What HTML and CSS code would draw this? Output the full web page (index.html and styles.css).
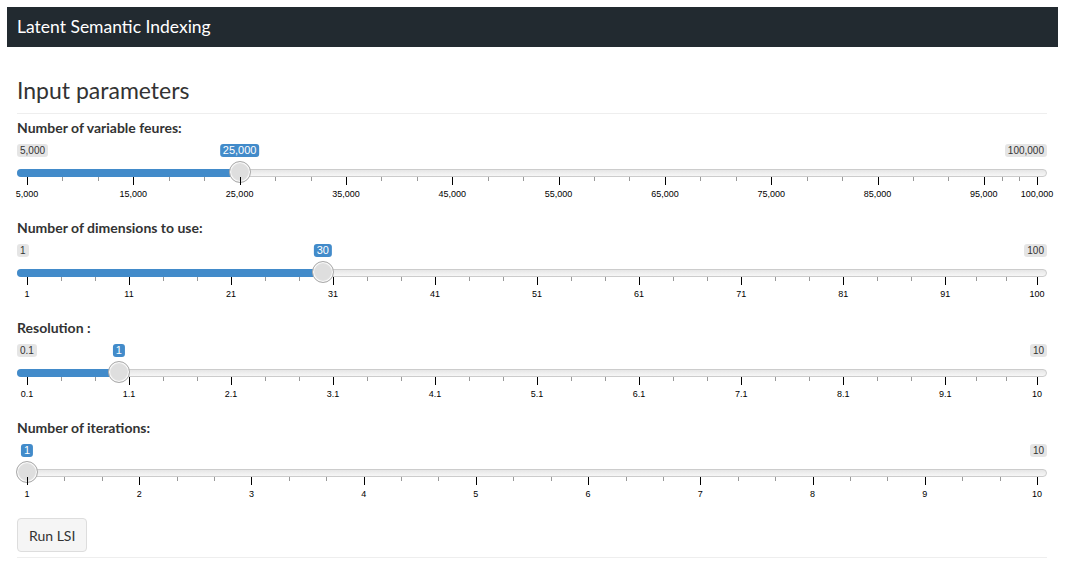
FILE: index.html
```html
<!DOCTYPE html>
<html>
<head>
<meta charset="utf-8">
<title>Latent Semantic Indexing</title>
<link rel="stylesheet" href="styles.css">
</head>
<body>
<div class="page">
  <nav class="navbar"><span class="brand">Latent Semantic Indexing</span></nav>
  <div class="content">
    <h3 class="section-title">Input parameters</h3>
    <hr class="rule">

    <div class="form-group">
      <label class="control-label">Number of variable feures:</label>
      <div class="irs" style="--p: 0.210526">
        <span class="irs-line"></span>
        <span class="irs-bar"></span>
        <span class="irs-min">5,000</span>
        <span class="irs-max">100,000</span>
        <span class="irs-single">25,000</span>
        <span class="irs-handle"></span>
        <div class="irs-grid">
          <span class="pol" style="left:0%"></span><span class="pol small" style="left:3.5088%"></span><span class="pol small" style="left:7.0175%"></span>
          <span class="pol" style="left:10.5263%"></span><span class="pol small" style="left:14.0351%"></span><span class="pol small" style="left:17.5439%"></span>
          <span class="pol" style="left:21.0526%"></span><span class="pol small" style="left:24.5614%"></span><span class="pol small" style="left:28.0702%"></span>
          <span class="pol" style="left:31.5789%"></span><span class="pol small" style="left:35.0877%"></span><span class="pol small" style="left:38.5965%"></span>
          <span class="pol" style="left:42.1053%"></span><span class="pol small" style="left:45.6140%"></span><span class="pol small" style="left:49.1228%"></span>
          <span class="pol" style="left:52.6316%"></span><span class="pol small" style="left:56.1404%"></span><span class="pol small" style="left:59.6491%"></span>
          <span class="pol" style="left:63.1579%"></span><span class="pol small" style="left:66.6667%"></span><span class="pol small" style="left:70.1754%"></span>
          <span class="pol" style="left:73.6842%"></span><span class="pol small" style="left:77.1930%"></span><span class="pol small" style="left:80.7018%"></span>
          <span class="pol" style="left:84.2105%"></span><span class="pol small" style="left:87.7193%"></span><span class="pol small" style="left:91.2281%"></span>
          <span class="pol" style="left:94.7368%"></span><span class="pol small" style="left:96.4912%"></span><span class="pol small" style="left:98.2456%"></span>
          <span class="pol" style="left:100%"></span>
          <span class="grid-text" style="left:0%">5,000</span>
          <span class="grid-text" style="left:10.5263%">15,000</span>
          <span class="grid-text" style="left:21.0526%">25,000</span>
          <span class="grid-text" style="left:31.5789%">35,000</span>
          <span class="grid-text" style="left:42.1053%">45,000</span>
          <span class="grid-text" style="left:52.6316%">55,000</span>
          <span class="grid-text" style="left:63.1579%">65,000</span>
          <span class="grid-text" style="left:73.6842%">75,000</span>
          <span class="grid-text" style="left:84.2105%">85,000</span>
          <span class="grid-text" style="left:94.7368%">95,000</span>
          <span class="grid-text" style="left:100%">100,000</span>
        </div>
      </div>
    </div>

    <div class="form-group">
      <label class="control-label">Number of dimensions to use:</label>
      <div class="irs" style="--p: 0.292929">
        <span class="irs-line"></span>
        <span class="irs-bar"></span>
        <span class="irs-min">1</span>
        <span class="irs-max">100</span>
        <span class="irs-single">30</span>
        <span class="irs-handle"></span>
        <div class="irs-grid">
          <span class="pol" style="left:0%"></span><span class="pol small" style="left:3.3670%"></span><span class="pol small" style="left:6.7340%"></span>
          <span class="pol" style="left:10.1010%"></span><span class="pol small" style="left:13.4680%"></span><span class="pol small" style="left:16.8350%"></span>
          <span class="pol" style="left:20.2020%"></span><span class="pol small" style="left:23.5690%"></span><span class="pol small" style="left:26.9360%"></span>
          <span class="pol" style="left:30.3030%"></span><span class="pol small" style="left:33.6700%"></span><span class="pol small" style="left:37.0370%"></span>
          <span class="pol" style="left:40.4040%"></span><span class="pol small" style="left:43.7710%"></span><span class="pol small" style="left:47.1380%"></span>
          <span class="pol" style="left:50.5051%"></span><span class="pol small" style="left:53.8721%"></span><span class="pol small" style="left:57.2391%"></span>
          <span class="pol" style="left:60.6061%"></span><span class="pol small" style="left:63.9731%"></span><span class="pol small" style="left:67.3401%"></span>
          <span class="pol" style="left:70.7071%"></span><span class="pol small" style="left:74.0741%"></span><span class="pol small" style="left:77.4411%"></span>
          <span class="pol" style="left:80.8081%"></span><span class="pol small" style="left:84.1751%"></span><span class="pol small" style="left:87.5421%"></span>
          <span class="pol" style="left:90.9091%"></span><span class="pol small" style="left:93.9394%"></span><span class="pol small" style="left:96.9697%"></span>
          <span class="pol" style="left:100%"></span>
          <span class="grid-text" style="left:0%">1</span>
          <span class="grid-text" style="left:10.1010%">11</span>
          <span class="grid-text" style="left:20.2020%">21</span>
          <span class="grid-text" style="left:30.3030%">31</span>
          <span class="grid-text" style="left:40.4040%">41</span>
          <span class="grid-text" style="left:50.5051%">51</span>
          <span class="grid-text" style="left:60.6061%">61</span>
          <span class="grid-text" style="left:70.7071%">71</span>
          <span class="grid-text" style="left:80.8081%">81</span>
          <span class="grid-text" style="left:90.9091%">91</span>
          <span class="grid-text" style="left:100%">100</span>
        </div>
      </div>
    </div>

    <div class="form-group">
      <label class="control-label">Resolution :</label>
      <div class="irs" style="--p: 0.090909">
        <span class="irs-line"></span>
        <span class="irs-bar"></span>
        <span class="irs-min">0.1</span>
        <span class="irs-max">10</span>
        <span class="irs-single">1</span>
        <span class="irs-handle"></span>
        <div class="irs-grid">
          <span class="pol" style="left:0%"></span><span class="pol small" style="left:3.3670%"></span><span class="pol small" style="left:6.7340%"></span>
          <span class="pol" style="left:10.1010%"></span><span class="pol small" style="left:13.4680%"></span><span class="pol small" style="left:16.8350%"></span>
          <span class="pol" style="left:20.2020%"></span><span class="pol small" style="left:23.5690%"></span><span class="pol small" style="left:26.9360%"></span>
          <span class="pol" style="left:30.3030%"></span><span class="pol small" style="left:33.6700%"></span><span class="pol small" style="left:37.0370%"></span>
          <span class="pol" style="left:40.4040%"></span><span class="pol small" style="left:43.7710%"></span><span class="pol small" style="left:47.1380%"></span>
          <span class="pol" style="left:50.5051%"></span><span class="pol small" style="left:53.8721%"></span><span class="pol small" style="left:57.2391%"></span>
          <span class="pol" style="left:60.6061%"></span><span class="pol small" style="left:63.9731%"></span><span class="pol small" style="left:67.3401%"></span>
          <span class="pol" style="left:70.7071%"></span><span class="pol small" style="left:74.0741%"></span><span class="pol small" style="left:77.4411%"></span>
          <span class="pol" style="left:80.8081%"></span><span class="pol small" style="left:84.1751%"></span><span class="pol small" style="left:87.5421%"></span>
          <span class="pol" style="left:90.9091%"></span><span class="pol small" style="left:93.9394%"></span><span class="pol small" style="left:96.9697%"></span>
          <span class="pol" style="left:100%"></span>
          <span class="grid-text" style="left:0%">0.1</span>
          <span class="grid-text" style="left:10.1010%">1.1</span>
          <span class="grid-text" style="left:20.2020%">2.1</span>
          <span class="grid-text" style="left:30.3030%">3.1</span>
          <span class="grid-text" style="left:40.4040%">4.1</span>
          <span class="grid-text" style="left:50.5051%">5.1</span>
          <span class="grid-text" style="left:60.6061%">6.1</span>
          <span class="grid-text" style="left:70.7071%">7.1</span>
          <span class="grid-text" style="left:80.8081%">8.1</span>
          <span class="grid-text" style="left:90.9091%">9.1</span>
          <span class="grid-text" style="left:100%">10</span>
        </div>
      </div>
    </div>

    <div class="form-group">
      <label class="control-label">Number of iterations:</label>
      <div class="irs" style="--p: 0">
        <span class="irs-line"></span>
        <span class="irs-bar"></span>
        <span class="irs-max">10</span>
        <span class="irs-single">1</span>
        <span class="irs-handle"></span>
        <div class="irs-grid">
          <span class="pol" style="left:0%"></span><span class="pol small" style="left:3.7037%"></span><span class="pol small" style="left:7.4074%"></span>
          <span class="pol" style="left:11.1111%"></span><span class="pol small" style="left:14.8148%"></span><span class="pol small" style="left:18.5185%"></span>
          <span class="pol" style="left:22.2222%"></span><span class="pol small" style="left:25.9259%"></span><span class="pol small" style="left:29.6296%"></span>
          <span class="pol" style="left:33.3333%"></span><span class="pol small" style="left:37.0370%"></span><span class="pol small" style="left:40.7407%"></span>
          <span class="pol" style="left:44.4444%"></span><span class="pol small" style="left:48.1481%"></span><span class="pol small" style="left:51.8519%"></span>
          <span class="pol" style="left:55.5556%"></span><span class="pol small" style="left:59.2593%"></span><span class="pol small" style="left:62.9630%"></span>
          <span class="pol" style="left:66.6667%"></span><span class="pol small" style="left:70.3704%"></span><span class="pol small" style="left:74.0741%"></span>
          <span class="pol" style="left:77.7778%"></span><span class="pol small" style="left:81.4815%"></span><span class="pol small" style="left:85.1852%"></span>
          <span class="pol" style="left:88.8889%"></span><span class="pol small" style="left:92.5926%"></span><span class="pol small" style="left:96.2963%"></span>
          <span class="pol" style="left:100%"></span>
          <span class="grid-text" style="left:0%">1</span>
          <span class="grid-text" style="left:11.1111%">2</span>
          <span class="grid-text" style="left:22.2222%">3</span>
          <span class="grid-text" style="left:33.3333%">4</span>
          <span class="grid-text" style="left:44.4444%">5</span>
          <span class="grid-text" style="left:55.5556%">6</span>
          <span class="grid-text" style="left:66.6667%">7</span>
          <span class="grid-text" style="left:77.7778%">8</span>
          <span class="grid-text" style="left:88.8889%">9</span>
          <span class="grid-text" style="left:100%">10</span>
        </div>
      </div>
    </div>

    <button class="btn" type="button">Run LSI</button>
    <hr class="rule bottom-rule">
  </div>
</div>
</body>
</html>
```

FILE: styles.css
```css
* { box-sizing: border-box; }

html, body {
  margin: 0;
  padding: 0;
  background: #fff;
}

body {
  font-family: "Lato", "Liberation Sans", sans-serif;
  font-size: 14px;
  line-height: 1.42857;
  color: #333;
}

.page {
  padding: 7px;
}

.navbar {
  height: 40px;
  background: #222a30;
  padding: 0 10px;
  display: flex;
  align-items: center;
}

.brand {
  color: #fff;
  font-size: 17.5px;
  line-height: 20px;
}

.content {
  padding: 0 11px 0 10px;
}

.section-title {
  margin: 30px 0 10px;
  font-size: 23px;
  font-weight: 400;
  line-height: 26px;
  color: #333;
}

.rule {
  margin: 0 0 4px;
  border: 0;
  border-top: 1px solid #eee;
}

.form-group {
  margin-bottom: 15px;
}

.control-label {
  display: block;
  font-weight: 700;
  line-height: 20px;
  margin-bottom: 5px;
}

.irs {
  position: relative;
  height: 60px;
  font-family: "Liberation Sans", Arial, sans-serif;
}

.irs-line {
  position: absolute;
  top: 26px;
  left: 0;
  right: 0;
  height: 8px;
  border: 1px solid #ccc;
  border-radius: 8px;
  background: linear-gradient(to bottom, #dedede -50%, #fff 150%);
}

.irs-bar {
  position: absolute;
  top: 26px;
  left: 0;
  height: 8px;
  width: calc(10px + (100% - 20px) * var(--p));
  background: #428bca;
  border-radius: 8px 0 0 8px;
}

.irs-min,
.irs-max {
  position: absolute;
  top: 1px;
  font-size: 10px;
  line-height: 11px;
  padding: 1px 3px;
  border-radius: 3px;
  background: rgba(0, 0, 0, 0.1);
  color: #333;
}

.irs-min { left: 0; }
.irs-max { right: 0; }

.irs-single {
  position: absolute;
  top: 1px;
  left: calc(10px + (100% - 20px) * var(--p));
  transform: translateX(-50%);
  font-size: 11px;
  line-height: 11px;
  padding: 1px 3px;
  border-radius: 3px;
  background: #428bca;
  color: #fff;
  white-space: nowrap;
}

.irs-handle {
  position: absolute;
  top: 18px;
  left: calc(10px + (100% - 20px) * var(--p) - 11px);
  width: 22px;
  height: 22px;
  border: 1px solid #ababab;
  border-radius: 50%;
  background: #dedede;
  box-shadow: inset 0 0 1px 1px #fff;
}

.irs-grid {
  position: absolute;
  top: 34px;
  left: 10px;
  right: 10px;
  height: 26px;
}

.pol {
  position: absolute;
  top: 0;
  width: 1px;
  height: 8px;
  background: #000;
}

.pol.small {
  height: 4px;
  background: #999;
}

.grid-text {
  position: absolute;
  top: 11px;
  transform: translateX(-50%);
  font-size: 9px;
  line-height: 12px;
  color: #000;
  white-space: nowrap;
}

.btn {
  display: inline-block;
  height: 34px;
  padding: 0 11px;
  font-family: inherit;
  font-size: 14px;
  color: #333;
  background: #f5f5f5;
  border: 1px solid #ddd;
  border-radius: 4px;
}

.bottom-rule {
  margin-top: 5px;
}
```
